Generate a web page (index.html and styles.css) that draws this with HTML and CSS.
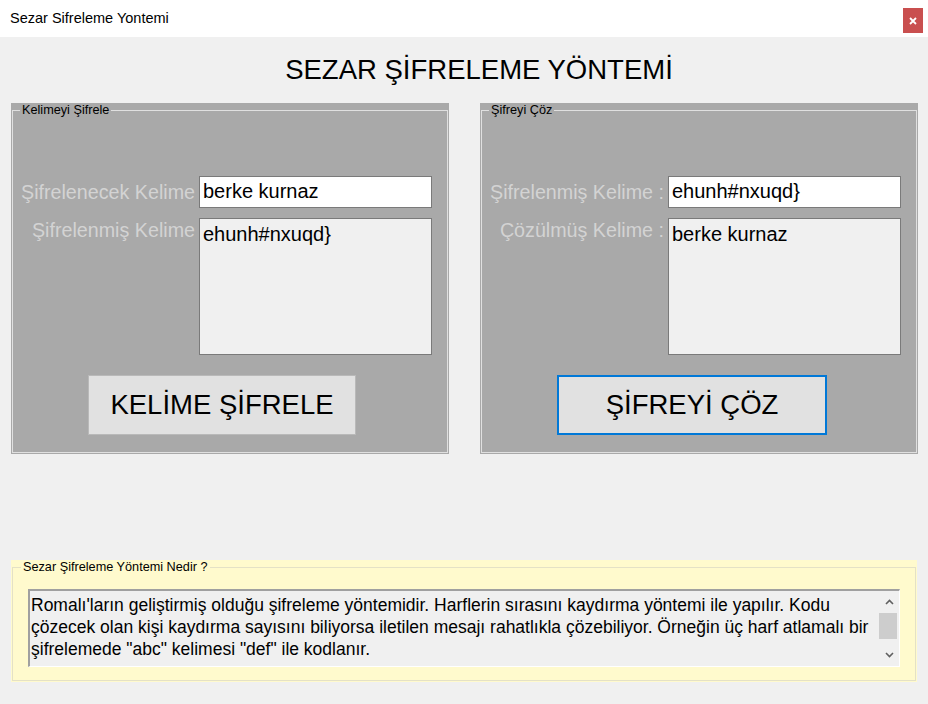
FILE: index.html
```html
<!DOCTYPE html>
<html lang="tr">
<head>
<meta charset="utf-8">
<title>Sezar Sifreleme Yontemi</title>
<link rel="stylesheet" href="styles.css">
</head>
<body>
<div class="window">
  <div class="titlebar">
    <span class="title">Sezar Sifreleme Yontemi</span>
    <button class="close" aria-label="Kapat">
      <svg width="8" height="8" viewBox="0 0 8 8"><path d="M1 1 L7 7 M7 1 L1 7" stroke="#fff" stroke-width="1.8" fill="none"/></svg>
    </button>
  </div>
  <main class="client">
    <h1 class="heading">SEZAR ŞİFRELEME YÖNTEMİ</h1>
    <div class="groups">
      <section class="panel">
        <fieldset class="group">
          <legend class="legend">Kelimeyi Şifrele</legend>
          <div class="rows">
            <div class="row row-single">
              <span class="label">Şifrelenecek Kelime</span>
              <div class="input">berke kurnaz</div>
            </div>
            <div class="row row-multi">
              <span class="label label-multi">Şifrelenmiş Kelime</span>
              <div class="area">ehunh#nxuqd}</div>
            </div>
            <div class="actions">
              <button class="btn">KELİME ŞİFRELE</button>
            </div>
          </div>
        </fieldset>
      </section>
      <section class="panel">
        <fieldset class="group">
          <legend class="legend">Şifreyi Çöz</legend>
          <div class="rows">
            <div class="row row-single">
              <span class="label">Şifrelenmiş Kelime :</span>
              <div class="input">ehunh#nxuqd}</div>
            </div>
            <div class="row row-multi">
              <span class="label label-multi">Çözülmüş Kelime :</span>
              <div class="area">berke kurnaz</div>
            </div>
            <div class="actions">
              <button class="btn btn-focused">ŞİFREYİ ÇÖZ</button>
            </div>
          </div>
        </fieldset>
      </section>
    </div>
    <section class="info-panel">
      <fieldset class="info">
        <legend class="legend legend-info">Sezar Şifreleme Yöntemi Nedir ?</legend>
        <div class="memo">
          <div class="memo-text">Romalı'ların geliştirmiş olduğu şifreleme yöntemidir. Harflerin sırasını kaydırma yöntemi ile yapılır. Kodu<br>çözecek olan kişi kaydırma sayısını biliyorsa iletilen mesajı rahatlıkla çözebiliyor. Örneğin üç harf atlamalı bir<br>şifrelemede "abc" kelimesi "def" ile kodlanır.</div>
          <div class="scrollbar">
            <div class="sb-btn"><svg width="9" height="6" viewBox="0 0 9 6"><polyline points="1,5 4.5,1.5 8,5" stroke="#606060" stroke-width="1.6" fill="none"/></svg></div>
            <div class="sb-thumb"></div>
            <div class="sb-track"></div>
            <div class="sb-btn"><svg width="9" height="6" viewBox="0 0 9 6"><polyline points="1,1 4.5,4.5 8,1" stroke="#606060" stroke-width="1.6" fill="none"/></svg></div>
          </div>
        </div>
      </fieldset>
    </section>
  </main>
</div>
</body>
</html>
```
FILE: styles.css
```css
* { box-sizing: border-box; }

html, body {
  margin: 0;
  padding: 0;
}

body {
  width: 928px;
  height: 704px;
  overflow: hidden;
  background: #f0f0f0;
  font-family: "Liberation Sans", Arial, sans-serif;
  color: #000;
}

.titlebar {
  height: 37px;
  background: #fff;
  display: flex;
  align-items: flex-start;
}

.title {
  font-family: "Segoe UI", "Liberation Sans", Arial, sans-serif;
  font-size: 14.5px;
  line-height: 36px;
  padding-left: 10px;
}

.close {
  margin-left: auto;
  margin-right: 5px;
  margin-top: 8px;
  width: 20px;
  height: 25px;
  padding: 0;
  border: 0;
  background: #c94f4f;
  display: flex;
  align-items: center;
  justify-content: center;
}

.client {
  display: flex;
  flex-direction: column;
}

.heading {
  margin: 17px 0 0 30px;
  font-size: 27.5px;
  line-height: 32px;
  font-weight: normal;
  text-align: center;
}

.groups {
  display: flex;
  gap: 31px;
  margin-top: 17px;
  padding-left: 11px;
}

.panel {
  width: 438px;
  height: 351px;
  background: #a9a9a9;
  padding: 1px;
}

.group {
  margin: 0;
  padding: 0;
  min-width: 0;
  height: 100%;
  border: 1px solid #e0e0e0;
}

.legend {
  margin-left: 7px;
  padding: 0 2px;
  font-size: 12.7px;
  line-height: 13px;
  color: #000;
}

.rows {
  padding-top: 59px;
  display: flex;
  flex-direction: column;
}

.row {
  display: flex;
  justify-content: flex-end;
  gap: 4px;
  padding-right: 15px;
}

.row-single { align-items: center; }

.row-multi {
  align-items: flex-start;
  margin-top: 10px;
}

.label {
  font-size: 19.7px;
  line-height: 23px;
  color: #d3d3d3;
  white-space: nowrap;
}

.label-multi { margin-top: 1px; }

.input {
  width: 233px;
  height: 32px;
  background: #fff;
  border: 1px solid #7a7a7a;
  padding: 3px 3px 0;
  font-size: 20px;
  line-height: 23px;
}

.area {
  width: 233px;
  height: 137px;
  background: #f0f0f0;
  border: 1px solid #7a7a7a;
  padding: 4px 3px 0;
  font-size: 20px;
  line-height: 23px;
}

.actions {
  margin-top: 20px;
  padding-left: 75px;
  display: flex;
}

.btn {
  width: 268px;
  height: 60px;
  padding: 0;
  background: #e1e1e1;
  border: 1px solid #b9b9b9;
  font-family: "Liberation Sans", Arial, sans-serif;
  font-size: 27.5px;
  color: #000;
}

.btn-focused {
  width: 270px;
  border: 2px solid #0078d7;
}

.info-panel {
  margin: 106px 0 0 11px;
  width: 906px;
  height: 122px;
  background: #fffacd;
  padding: 1px;
}

.info {
  margin: 0;
  padding: 0;
  min-width: 0;
  height: 100%;
  border: 1px solid #e4e1c6;
}

.legend-info { margin-left: 8px; }

.memo {
  margin: 15px 0 0 15px;
  width: 872px;
  height: 78px;
  display: flex;
  background: #f0f0f0;
  border-top: 2px solid #a0a0a0;
  border-left: 2px solid #a0a0a0;
  border-right: 1px solid #fff;
  border-bottom: 1px solid #fff;
}

.memo-text {
  flex: 1;
  padding: 3px 0 0 1px;
  font-size: 17.5px;
  line-height: 22px;
  white-space: nowrap;
  overflow: hidden;
}

.scrollbar {
  width: 20px;
  display: flex;
  flex-direction: column;
}

.sb-btn {
  height: 22px;
  display: flex;
  align-items: center;
  justify-content: center;
}

.sb-thumb {
  height: 26px;
  margin: 0 2px 0 0;
  background: #cdcdcd;
}

.sb-track { flex: 1; }
```
